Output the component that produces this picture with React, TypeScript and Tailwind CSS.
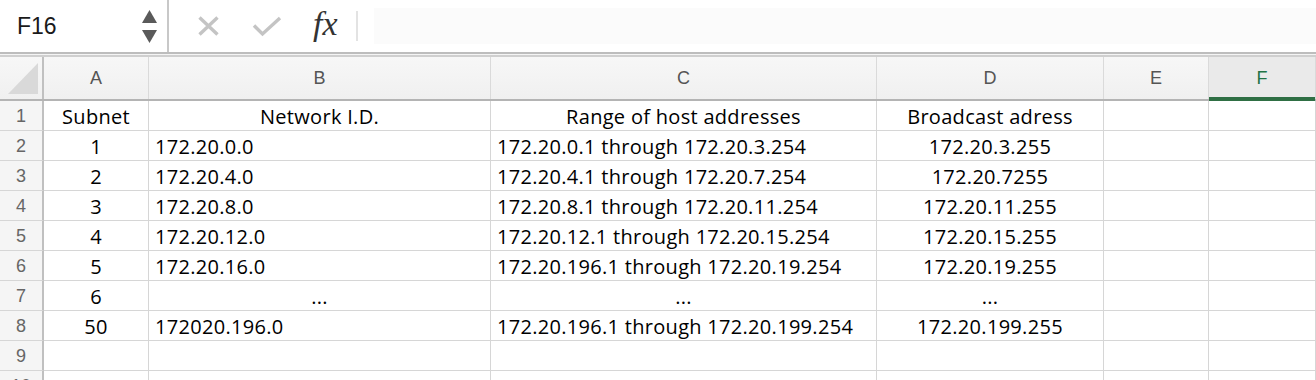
import React from "react";

const cols = ["w-[44px]", "w-[105px]", "w-[342px]", "w-[386px]", "w-[227px]", "w-[105px]", "w-[107px]"];

type Cell = { t: string; a: "c" | "l" };

const rows: Cell[][] = [
  [{ t: "Subnet", a: "c" }, { t: "Network I.D.", a: "c" }, { t: "Range of host addresses", a: "c" }, { t: "Broadcast adress", a: "c" }],
  [{ t: "1", a: "c" }, { t: "172.20.0.0", a: "l" }, { t: "172.20.0.1 through 172.20.3.254", a: "l" }, { t: "172.20.3.255", a: "c" }],
  [{ t: "2", a: "c" }, { t: "172.20.4.0", a: "l" }, { t: "172.20.4.1 through 172.20.7.254", a: "l" }, { t: "172.20.7255", a: "c" }],
  [{ t: "3", a: "c" }, { t: "172.20.8.0", a: "l" }, { t: "172.20.8.1 through 172.20.11.254", a: "l" }, { t: "172.20.11.255", a: "c" }],
  [{ t: "4", a: "c" }, { t: "172.20.12.0", a: "l" }, { t: "172.20.12.1 through 172.20.15.254", a: "l" }, { t: "172.20.15.255", a: "c" }],
  [{ t: "5", a: "c" }, { t: "172.20.16.0", a: "l" }, { t: "172.20.196.1 through 172.20.19.254", a: "l" }, { t: "172.20.19.255", a: "c" }],
  [{ t: "6", a: "c" }, { t: "...", a: "c" }, { t: "...", a: "c" }, { t: "...", a: "c" }],
  [{ t: "50", a: "c" }, { t: "172020.196.0", a: "l" }, { t: "172.20.196.1 through 172.20.199.254", a: "l" }, { t: "172.20.199.255", a: "c" }],
  [],
  [],
];

export default function App() {
  return (
    <div className="w-[1316px] h-[380px] overflow-hidden bg-white" style={{ fontFamily: "'Open Sans', Lato, sans-serif" }}>
      {/* Formula bar */}
      <div className="flex h-[52px] items-stretch">
        <div className="w-[169px] shrink-0 border-r-2 border-[#c8c8c8] flex items-center justify-between pl-[17px] pr-[10px]">
          <span className="text-[23px] text-[#1a1a1a] leading-none" style={{ fontFamily: "'Liberation Sans', Arial, sans-serif" }}>F16</span>
          <div className="flex flex-col gap-[7px] mt-[1px]">
            <svg width="15" height="13" viewBox="0 0 15 13"><path d="M7.5 0 L15 13 L0 13 Z" fill="#5a5a5a" /></svg>
            <svg width="15" height="13" viewBox="0 0 15 13"><path d="M0 0 L15 0 L7.5 13 Z" fill="#5a5a5a" /></svg>
          </div>
        </div>
        <div className="flex items-center pl-[28px]">
          <svg width="23" height="20" viewBox="0 0 23 20"><path d="M2.5 1.5 L20.5 18.5 M20.5 1.5 L2.5 18.5" stroke="#c4c4c4" strokeWidth="3.4" /></svg>
          <svg className="ml-[32px]" width="30" height="22" viewBox="0 0 30 22"><path d="M2 10.5 L10.5 19 L28 3" stroke="#c4c4c4" strokeWidth="3.4" fill="none" /></svg>
          <span className="ml-[31px] text-[34px] italic text-[#333] leading-none -mt-[4px]" style={{ fontFamily: "'Liberation Serif', 'Times New Roman', serif" }}>fx</span>
          <div className="ml-[18px] w-[2px] h-[30px] bg-[#e3e3e3]" />
        </div>
        <div className="flex-1 my-[8px] ml-[16px] bg-[#fbfbfb]" />
      </div>
      <div className="h-[5px] border-t-2 border-b-2 border-t-[#bdbdbd] border-b-[#cfcfcf] bg-[#f4f4f4]" />

      {/* Column header */}
      <div className="flex h-[44px] border-b-2 border-[#b4b4b4] bg-gradient-to-b from-[#f7f7f7] to-[#f0f0f0]">
        <div className={`${cols[0]} shrink-0 border-r-2 border-[#c0c0c0] relative`}>
          <svg className="absolute left-[8px] top-[6px]" width="30" height="31" viewBox="0 0 30 31"><path d="M30 0 L30 31 L0 31 Z" fill="#d9d9d9" /></svg>
        </div>
        {["A", "B", "C", "D", "E", "F"].map((l, i) => (
          <div
            key={l}
            className={`${cols[i + 1]} ${i === 0 ? "w-[104px]" : ""} shrink-0 border-r border-[#dadada] flex items-center justify-center text-[18px] relative ${l === "F" ? "text-[#217346] bg-[#eaeaea]" : "text-[#555]"}`}
            style={{ fontFamily: "'Liberation Sans', Arial, sans-serif" }}
          >
            {l}
            {l === "F" && <div className="absolute left-0 right-0 bottom-[-2px] h-[4px] bg-[#2f6f44]" />}
          </div>
        ))}
      </div>

      {/* Rows */}
      {rows.map((r, ri) => (
        <div key={ri} className="flex h-[30px]">
          <div className={`${cols[0]} shrink-0 border-r-2 border-b border-r-[#c0c0c0] border-b-[#d6d6d6] bg-[#f5f5f5] flex items-center justify-center text-[18px] text-[#666] pt-[1px]`} style={{ fontFamily: "'Liberation Sans', Arial, sans-serif" }}>
            {ri + 1}
          </div>
          {[0, 1, 2, 3, 4, 5].map((ci) => {
            const c = r[ci];
            return (
              <div
                key={ci}
                className={`${cols[ci + 1]} ${ci === 0 ? "w-[104px]" : ""} shrink-0 border-r border-b border-[#d6d6d6] flex items-center pt-[2px] text-[20px] tracking-[0.3px] leading-none text-black whitespace-nowrap overflow-hidden ${c && c.a === "l" ? "justify-start pl-[6px]" : "justify-center"}`}
              >
                {c ? c.t : ""}
              </div>
            );
          })}
        </div>
      ))}
    </div>
  );
}
